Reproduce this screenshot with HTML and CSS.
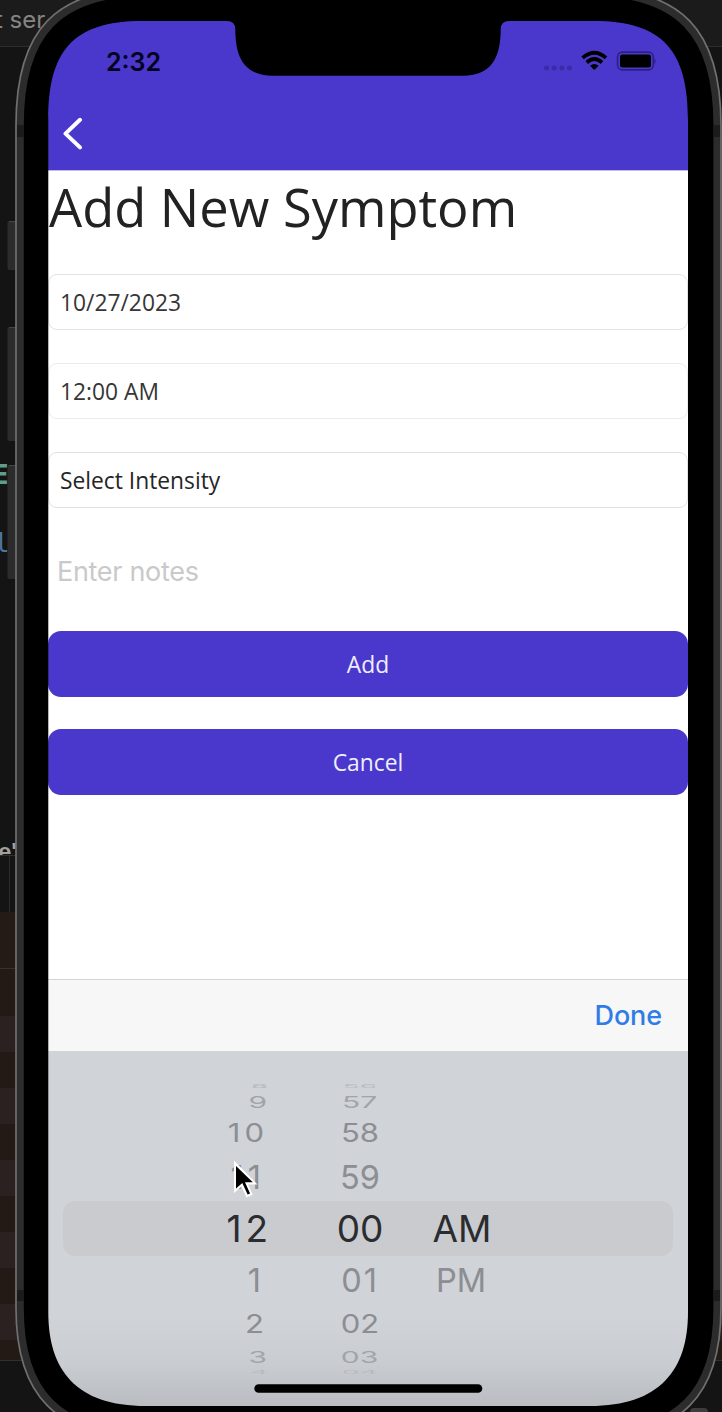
FILE: index.html
```html
<!DOCTYPE html>
<html lang="en">
<head>
<meta charset="utf-8">
<title>Add New Symptom</title>
<link rel="stylesheet" href="styles.css">
</head>
<body>
<div class="desktop">
  <div class="backdrop">
    <div class="editor-tab">t ser</div>
    <div class="editor-code">
      <span class="code code-type">E</span>
      <span class="code code-name">l</span>
      <span class="code code-label">e'</span>
    </div>
    <div class="editor-gutter"></div>
    <div class="editor-log"></div>
  </div>

  <main class="screen">
    <header class="topbar">
      <div class="status">
        <span class="clock">2:32</span>
        <svg class="status-icons" width="114" height="24" viewBox="0 0 114 24">
          <g fill="#3a2ba6"><circle cx="4.5" cy="18" r="2.5"/><circle cx="12.2" cy="18" r="2.5"/><circle cx="19.9" cy="18" r="2.5"/><circle cx="27.5" cy="18" r="2.5"/></g>
          <g fill="none" stroke="#000" stroke-width="3.8"><path d="M40.6 7.9Q52.3-2.5 64 7.9"/><path d="M44.7 12.5Q52.3 5.6 60 12.5"/></g>
          <path d="M48 15.7Q52.3 12.2 56.7 15.7L52.9 19.6Q52.3 20.1 51.7 19.6Z"/>
          <rect x="75.5" y="2.1" width="35.8" height="17.8" rx="4.8" fill="none" stroke="#2c2083" stroke-width="1.6"/>
          <rect x="78" y="4.6" width="31" height="12.8" rx="2.2"/>
          <path d="M112.3 8.2Q114.9 11.2 112.3 14.4Z" fill="#2c2083"/>
        </svg>
      </div>
      <svg class="back" width="22" height="34" viewBox="0 0 22 34" fill="none" stroke="#fff" stroke-width="4" stroke-linecap="round" stroke-linejoin="round"><path d="M18 2.8 3.5 16.6 18 30.4"/></svg>
    </header>
    <h1 class="title">Add New Symptom</h1>
    <div class="form">
      <div class="field">10/27/2023</div>
      <div class="field field-faint">12:00 AM</div>
      <div class="field field-select">Select Intensity</div>
      <div class="notes">Enter notes</div>
      <div class="button">Add</div>
      <div class="button">Cancel</div>
    </div>
    <div class="accessory"><span>Done</span></div>
    <div class="picker">
      <div class="wheel hours">
        <span class="r4"><b>8</b></span><span class="r3"><b>9</b></span><span class="r2"><b class="spaced">10</b></span><span class="r1 eleven"><b class="spaced">11</b></span><span class="r0"><b class="spaced">12</b></span><span class="r1 below"><b>1</b></span><span class="r2"><b>2</b></span><span class="r3"><b>3</b></span><span class="r4"><b>4</b></span>
      </div>
      <div class="wheel minutes">
        <span class="r4"><b>56</b></span><span class="r3"><b>57</b></span><span class="r2"><b>58</b></span><span class="r1"><b>59</b></span><span class="r0"><b>00</b></span><span class="r1 below"><b class="zero-one">01</b></span><span class="r2"><b>02</b></span><span class="r3"><b>03</b></span><span class="r4"><b>04</b></span>
      </div>
      <div class="wheel period">
        <span class="r0"><b>AM</b></span><span class="r1 below"><b>PM</b></span>
      </div>
    </div>
  </main>

  <svg class="frame" width="722" height="1412" viewBox="0 0 722 1412">
    <g fill="#2c2c2c"><rect x="7.5" y="221" width="10" height="49" rx="2"/><rect x="7.5" y="327" width="10" height="114" rx="2"/><rect x="7.5" y="465" width="10" height="114" rx="2"/></g>
    <g stroke="#454545"><path d="M9 221.5h7M9 327.5h7M9 465.5h7"/></g>
    <rect x="690" y="1408" width="18" height="8" rx="4" fill="#3c3c3c"/>
    <path fill="#000" fill-rule="evenodd" d="M16 125C16 30 55 -12 150 -12H587C682 -12 721 30 721 125V1308C721 1395 682 1438 587 1438H150C55 1438 16 1395 16 1308ZM48.3 120C48.3 52 72 21 142 21H227Q235 21 235.3 29C235.3 57 244 75.7 273 75.7H463C492 75.7 500.7 57 500.7 29Q501 21 509 21H594C664 21 688 52 688 120V1312C688 1370 660 1406 590 1406H146C76 1406 48.3 1370 48.3 1312Z"/>
    <path fill="none" stroke="#2c2c2c" stroke-width="7.6" d="M20 125C20 34 57 -8 150 -8H587C680 -8 717.2 34 717.2 125V1308C717.2 1392 680 1434 587 1434H150C57 1434 20 1392 20 1308Z"/>
    <g fill="#1b1b1b"><rect x="17" y="125" width="7" height="12"/><rect x="713.5" y="125" width="7" height="12"/><rect x="17" y="1290" width="7" height="11"/><rect x="713.5" y="1290" width="7" height="11"/></g>
    <path fill="none" stroke="#707070" stroke-width="1.7" d="M16 125C16 30 55 -12 150 -12H587C682 -12 721 30 721 125V1308C721 1395 682 1438 587 1438H150C55 1438 16 1395 16 1308Z"/>
    <rect x="254.3" y="1384.2" width="228" height="8.6" rx="4.3"/>
    <g transform="translate(234 1161)"><path d="M0-.5V32L7.5 25.5 12.5 36.5 18.7 33.8 14 23.5H23.5Z" fill="#fff"/><path d="M2 5V27.5L8.3 22 13.6 33.6 16.1 32.4 11 21.3H18.8Z"/></g>
  </svg>
</div>
</body>
</html>
```
FILE: styles.css
```css
* { box-sizing: border-box; }
body { margin: 0; background: #141414; }
.desktop { position: relative; width: 722px; height: 1412px; overflow: hidden; padding: 21px 34px 6px 48px; }

/* editor window behind the simulator */
.backdrop { position: absolute; inset: 0; display: flex; flex-direction: column; background: #141414; }
.editor-tab { height: 47px; padding-top: 6px; background: #1b1b1b; border-bottom: 1px solid #2d2d2d; color: #858585; font: 24px/28px Inter, sans-serif; text-indent: -5px; white-space: nowrap; }
.editor-code { height: 809px; border-bottom: 1px solid #303030; display: flex; flex-direction: column; overflow: hidden; }
.code { display: block; height: 30px; font: 26px/30px "DejaVu Sans Mono", monospace; }
.code-type { margin: 413px 0 0 -7px; color: #5f9c8b; font-weight: bold; }
.code-name { margin: 38px 0 0 -6px; color: #4b74a4; }
.code-label { margin: 279px 0 0 -2px; color: #a0a0a0; font: bold 24px/30px "Liberation Sans", sans-serif; }
.editor-gutter { height: 56px; width: 10px; border-right: 1px solid #2c2c2c; }
.editor-log { height: 449px; border-bottom: 1px solid #303030; background: linear-gradient(#241a16 56px, #3a302d 56px 57px, #231a15 57px 68px, transparent 68px), repeating-linear-gradient(#231a15 0 32px, #2b2120 32px 68px, #231a15 68px 72px); }

.screen { position: relative; width: 640px; height: 1385px; display: flex; flex-direction: column; background: #fff; }
.topbar { height: 149px; background: #4a38cd; padding: 28px 32px 0 58px; }
.status { display: flex; justify-content: space-between; height: 24px; }
.clock { font: 600 25px/27px Inter, sans-serif; color: #04021c; }
.status-icons { display: block; margin-top: 1px; }
.back { display: block; margin: 44px 0 0 -44px; }
.title { margin: 0; height: 104px; border-top: 1px solid #c2bbe7; padding-left: 1px; font: 400 52.4px/71px "Open Sans", sans-serif; color: #222; white-space: nowrap; }
.form { height: 705px; display: flex; flex-direction: column; }
.field { height: 56px; margin-bottom: 33px; border: 1px solid #e2e2e2; border-radius: 9px; padding-left: 11px; font: 22.8px/56px "Open Sans", sans-serif; color: #363636; }
.field-faint { border-color: #ebebeb; }
.field-select { margin-bottom: 32px; color: #262626; }
.notes { height: 91px; padding: 15px 0 0 9px; font: 27px/34px Inter, sans-serif; letter-spacing: -.3px; color: #c9c9cb; }
.button { height: 66px; margin-bottom: 32.4px; border-radius: 13px; background: #4a38cd; color: #f0eefb; text-align: center; font: 22.8px/68px "Open Sans", sans-serif; }
.accessory { height: 72px; border-top: 1px solid #d4d4d4; background: #f7f7f7; text-align: right; padding-right: 26px; font: 500 27px/72px Inter, sans-serif; letter-spacing: -.1px; color: #2e7de6; }

.picker { height: 355px; display: flex; padding-top: 31px; background: linear-gradient(#d0d3d8 75%, #c9ccd1 88%, #b9bcc1); position: relative; }
.picker::before { content: ""; position: absolute; left: 15px; right: 15px; top: 150px; height: 55px; border-radius: 12px; background: #cacbcf; }
.wheel { position: relative; display: flex; flex-direction: column; color: #8c8e92; font-family: Inter, sans-serif; }
.wheel span { display: flex; align-items: center; justify-content: center; }
.wheel b { font-weight: 370; line-height: 40px; }
.wheel .spaced { letter-spacing: 4px; margin-right: -4px; }
.wheel .zero-one { letter-spacing: 2px; }
.hours { width: 220px; }
.wheel.hours span { justify-content: flex-end; }
.wheel.hours .r1 { padding-right: 7px; }
.wheel.hours .r2 { padding-right: 4px; }
.minutes { width: 184px; }
.period { width: 90px; margin-left: -35px; padding-top: 120px; }
.wheel .r0 { height: 54px; font-size: 37px; color: #2b2c30; }
.wheel .r1 { height: 49px; font-size: 32.5px; }
.wheel .below { height: 48px; padding-top: 2px; }
.wheel .r2 { height: 40px; font-size: 31px; }
.wheel .r2 b { transform: scaleY(.82); }
.wheel .r3 { height: 24px; padding-top: 1px; padding-right: 1px; font-size: 30px; color: #a2a4a8; }
.wheel .r3 b { transform: scaleY(.53); }
.wheel .r4 { height: 7px; font-size: 28px; color: #b8babe; }
.wheel .r4 b { transform: scaleY(.17); }
.period .r1 { padding-right: 2px; }
.frame { position: absolute; left: 0; top: 0; }
```
